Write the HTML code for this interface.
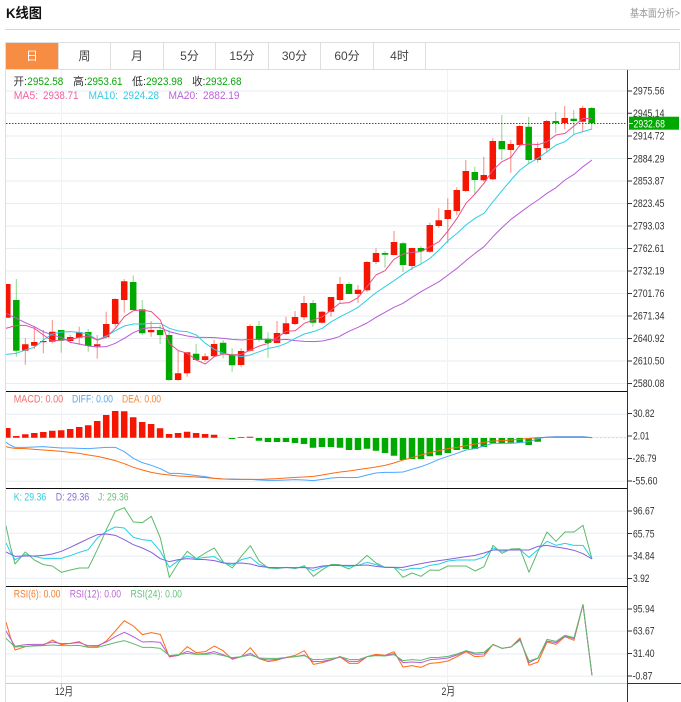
<!DOCTYPE html>
<html lang="zh">
<head>
<meta charset="utf-8">
<title>K线图</title>
<style>
html,body{margin:0;padding:0;background:#fff;width:681px;height:702px;overflow:hidden}
svg{display:block;font-family:"Liberation Sans","Noto Sans CJK SC",sans-serif}
.a{font-size:11px;fill:#333}
.l{font-size:11px}
.t{font-size:12px;fill:#444;text-anchor:middle}
polyline{fill:none;stroke-width:3;stroke-linejoin:round}
</style>
</head>
<body>
<svg width="681" height="702" viewBox="0 0 681 702" xmlns="http://www.w3.org/2000/svg">
<defs><clipPath id="c"><rect x="6" y="70" width="621" height="632"/></clipPath></defs>

<text x="6" y="18" textLength="36" lengthAdjust="spacingAndGlyphs" style="font-size:14px;font-weight:bold;fill:#111">K线图</text>
<text x="630" y="16.5" textLength="50" lengthAdjust="spacingAndGlyphs" style="font-size:10.5px;fill:#999">基本面分析&gt;</text>
<path d="M5 29.5H680" stroke="#d8d8d8" fill="none"/>

<!-- tabs -->
<rect x="6" y="43" width="52.5" height="26" fill="#f68d42"/>
<path d="M5.5 702V42.5H679.5V69.5H5.5M58.5 43V69M110.5 43V69M163.5 43V69M215.5 43V69M268.5 43V69M320.5 43V69M373.5 43V69M425.5 43V69" stroke="#dedede" fill="none"/>
<text class="t" x="32" y="60" style="fill:#fff">日</text>
<text class="t" x="84.5" y="60">周</text>
<text class="t" x="137" y="60">月</text>
<text class="t" x="189.5" y="60">5分</text>
<text class="t" x="242" y="60">15分</text>
<text class="t" x="294.5" y="60">30分</text>
<text class="t" x="347" y="60">60分</text>
<text class="t" x="399.5" y="60">4时</text>

<!-- grids -->
<path d="M6 91H627M6 113.3H627M6 136H627M6 158.5H627M6 181H627M6 203.5H627M6 226H627M6 248.5H627M6 271H627M6 293.5H627M6 316H627M6 338.5H627M6 361H627M6 383.5H627M6 414.3H627M6 437.3H627M6 459.3H627M6 481.3H627M6 511.3H627M6 533.3H627M6 556.3H627M6 578.3H627M6 609.3H627M6 631.3H627M6 654H627M6 676.3H627" stroke="#e6eef2" fill="none"/>
<path d="M61.5 70V683M447.5 70V683" stroke="#eff3f6" fill="none"/>

<g clip-path="url(#c)">
<!-- wicks red -->
<path stroke="#f51500" stroke-opacity=".5" fill="none" d="M25.3 338.3V364.7M34.3 326V349M43.3 330V353.3M52.3 320V343.3M70.2 335V343.3M79.2 326.7V345M97.2 335V358.7M106.2 311.7V338.3M115.2 298.3V326.7M124.2 279V312.7M151.1 321V336.7M178.1 350V380.7M187.1 352.3V376.7M205.1 353.3V361.7M214.1 340V357.3M241.1 348.3V366.7M250 324.3V351.7M277 321V343.3M286 316.7V335M295 311V325M304 296V320M322 311V323.3M331 297V316.7M340 277V301.7M358 285V302.7M367 261V292M376 248.3V264M394 231V255M412 248V270M429.8 222.7V252.7M438.8 208.3V227.7M447.8 198.3V243.3M456.8 187.3V215.3M465.8 160V191.7M483.8 156.7V181.7M492.8 138.3V180M510.8 140V172.7M519.7 125V146.7M537.7 142.3V162.7M546.7 120V152.7M564.7 106V129.3M582.7 105.7V131.7"/>
<!-- wicks green -->
<path stroke="#00a800" stroke-opacity=".45" fill="none" d="M16.3 279V356.7M61.2 330V352.7M88.2 329V351.7M133.2 275.3V310M142.2 300V335M160.1 325V344M169.1 330V380.7M196.1 344V360.7M223.1 340V358.3M232.1 348.3V371.7M259 321V341.7M268 332.3V357.7M313 300V326.7M349 282.3V294M385 251V267.7M403 241.7V272M421 246V263.3M474.8 166.7V194M501.8 115V160M528.7 117V163.3M555.7 112V133.3M573.7 110V135M591.7 107V129.3"/>
<!-- bodies red -->
<path stroke="#f51500" stroke-width="6.5" fill="none" d="M7.3 284V317.7M25.3 344.3V350.7M34.3 342V345.7M43.3 341V342.3M52.3 331.7V341.7M70.2 337V341M79.2 332.3V337.7M97.2 344.3V346.3M106.2 324V337.3M115.2 299V324M124.2 281.3V300M151.1 330V332.3M178.1 373.3V380M187.1 352.3V373.3M205.1 356.3V360M214.1 344V356.3M241.1 351V365M250 326V350.7M277 333V343M286 323.3V334M295 317V324M304 303V317.3M322 311.7V322.7M331 297V311.7M340 284V300M358 289.7V294M367 262V290.3M376 253V262M394 242V255M412 248V266M429.8 225V251.7M438.8 220.3V226M447.8 210V219M456.8 190V211M465.8 171V191M483.8 175V180.3M492.8 141V179.3M510.8 144V150M519.7 126V145M537.7 148V160M546.7 121V148.3M564.7 118V123M582.7 108V121.7"/>
<!-- bodies green -->
<path stroke="#00a900" stroke-width="6.5" fill="none" d="M16.3 300V350.7M61.2 330V340.7M88.2 332V346M133.2 282V310M142.2 309.3V333.3M160.1 330V335M169.1 335V380M196.1 353.7V360M223.1 342.7V353.7M232.1 354.3V365.3M259 326V340M268 338.7V343M313 303V322.7M349 284V294M385 253V254.7M403 243.3V265M421 248V251.3M474.8 172V180M501.8 141V149.3M528.7 126.7V160M555.7 121V123M573.7 118.7V121M591.7 108V123.3"/>

<!-- current price line -->
<path d="M6 123.5H627" stroke="#0a7a0a" stroke-dasharray="1.5 1.5" fill="none"/>

<!-- MA lines left half -->
<g transform="translate(0,260) scale(.33333)">
<polyline stroke="#b85cd6" points="18,160 49,175 76,188 103,200 130,215 157,225 184,232 211,247 238,252 265,258 292,261 319,260 346,250 373,235 400,218 427,206 454,203 481,203 508,215 535,222 562,228 589,232 616,232 643,233 670,235 697,238 724,240 751,238 778,238 805,238 832,240 859,238 886,242 913,244 940,245 967,243 994,237 1021,229"/>
<polyline stroke="#2fcde6" points="18,283 49,280 76,270 103,262 130,240 157,222 184,216 211,215 238,217 265,222 292,240 319,228 346,212 373,198 400,192 427,192 454,190 481,190 508,205 535,213 562,215 589,225 616,250 643,268 670,280 697,285 724,290 751,285 778,275 805,265 832,260 859,250 886,235 913,222 940,215 967,205 994,185 1021,170"/>
<polyline stroke="#ec4f8b" points="18,205 49,196 76,196 103,205 130,225 157,243 184,240 211,238 238,232 265,228 292,240 319,232 346,205 373,170 400,152 427,150 454,155 481,180 508,250 535,272 562,280 589,300 616,312 643,290 670,282 697,285 724,283 751,270 778,258 805,250 832,232 859,214 886,212 913,190 940,180 967,170 994,150 1021,128"/>
</g>
<!-- MA lines right half -->
<g transform="translate(340,0) scale(.33333)">
<polyline stroke="#b85cd6" points="0,1008 27,994 54,982 81,969 108,952 135,937 162,922 189,910 216,892 243,875 270,860 297,845 324,825 351,805 378,782 405,760 432,740 459,710 486,683 513,658 540,638 567,618 594,600 621,580 648,563 675,540 702,523 729,500 756,480"/>
<polyline stroke="#2fcde6" points="0,950 27,937 54,922 81,900 108,878 135,860 162,842 189,823 216,805 243,792 270,775 297,750 324,722 351,700 378,675 405,655 432,640 459,605 486,572 513,540 540,510 567,490 594,475 621,455 648,435 675,425 702,403 729,395 756,387"/>
<polyline stroke="#ec4f8b" points="0,910 27,908 54,893 81,860 108,825 135,812 162,778 189,762 216,757 243,755 270,740 297,725 324,693 351,655 378,610 405,582 432,550 459,510 486,485 513,472 540,435 567,432 594,434 621,425 648,405 675,400 702,378 729,355 756,356"/>
</g>

<!-- MACD bars -->
<path stroke="#f51500" stroke-width="6.5" fill="none" d="M7.3 428V437.7M16.3 436V437.7M25.3 434.3V437.7M34.3 433V437.7M43.3 432V437.7M52.3 430.7V437.7M61.2 430.3V437.7M70.2 429V437.7M79.2 427V437.7M88.2 425.3V437.7M97.2 421V437.7M106.2 415V437.7M115.2 411V437.7M124.2 411.3V437.7M133.2 417.3V437.7M142.2 422V437.7M151.1 424V437.7M160.1 428.3V437.7M169.1 434V437.7M178.1 433V437.7M187.1 431.7V437.7M196.1 433V437.7M205.1 434V437.7M214.1 434.7V437.7M241.1 437V437.8M250 436.8V437.7"/>
<path stroke="#00a900" stroke-width="6.5" fill="none" d="M232.1 438V439M259 438V440.7M268 438V442M277 438V442M286 438V442M295 438V443M304 438V444M313 438V447.7M322 438V447M331 438V447M340 438V447.7M349 438V450M358 438V450M367 438V448.7M376 438V450.7M385 438V453M394 438V455.7M403 438V460M412 438V459M421 438V459M429.8 438V456.3M438.8 438V455.3M447.8 438V453M456.8 438V450M465.8 438V449M474.8 438V449M483.8 438V447M492.8 438V443.3M501.8 438V443.3M510.8 438V442.7M519.7 438V442.7M528.7 438V445M537.7 438V441.7"/>
<g transform="translate(0,390) scale(.33333)">
<polyline stroke="#4ea7ff" points="18,157 30,165 45,172 76,172 103,171 130,170 157,172 184,174 211,174 238,175 265,176 292,174 319,172 346,172 373,185 400,205 427,218 454,226 481,236 508,250 535,250 562,253 589,257 616,260 643,265 670,267 697,267 724,268 751,268 778,270 805,271 832,271 859,270 886,269 913,270 940,272 967,268 994,264 1021,262"/>
<polyline stroke="#ff6a10" points="18,170 30,173 45,175 76,176 103,178 130,180 157,182 184,184 211,187 238,190 265,195 292,199 319,205 346,212 373,221 400,232 427,240 454,247 481,252 508,255 535,258 562,259 589,261 616,263 643,265 670,267 697,268 724,268 751,268 778,268 805,267 832,266 859,264 886,262 913,261 940,259 967,255 994,250 1021,246"/>
</g>
<g transform="translate(340,390) scale(.33333)">
<polyline stroke="#4ea7ff" points="0,262 27,263 54,262 81,255 108,249 135,247 162,247 189,246 216,238 243,230 270,220 297,208 324,199 351,190 378,180 405,176 432,168 459,160 486,160 513,160 540,158 567,155 594,146 621,141 648,140 675,140 702,140 729,140 756,143"/>
<polyline stroke="#ff6a10" points="0,246 27,243 54,239 81,235 108,231 135,226 162,219 189,210 216,203 243,195 270,188 297,182 324,176 351,172 378,167 405,162 432,157 459,153 486,152 513,150 540,148 567,145 594,143 621,142 648,142 675,142 702,142 729,142 756,143"/>
</g>
<path d="M592 437.7H627" stroke="#bfe0f5" stroke-dasharray="2 2" fill="none"/>

<!-- KDJ -->
<g transform="translate(0,488) scale(.33333)">
<polyline stroke="#5cbb6a" points="18,113 30,170 45,228 76,192 103,216 130,230 157,234 184,253 211,246 238,240 265,240 292,185 319,125 346,70 373,59 400,102 427,104 454,85 481,150 508,268 535,225 562,190 589,212 616,195 643,180 670,222 697,240 724,205 751,173 778,220 805,240 832,242 859,238 886,242 913,233 940,265 967,245 994,229 1021,230"/>
<polyline stroke="#27cfe6" points="18,165 30,190 45,215 76,200 103,205 130,211 157,211 184,211 211,203 238,193 265,185 292,150 319,130 346,117 373,120 400,148 427,155 454,158 481,190 508,238 535,218 562,204 589,212 616,208 643,206 670,224 697,232 724,215 751,208 778,230 805,238 832,240 859,238 886,240 913,237 940,248 967,237 994,232 1021,233"/>
<polyline stroke="#8a5fd8" points="18,192 45,205 76,204 103,204 130,202 157,198 184,190 211,178 238,165 265,152 292,140 319,138 346,142 373,155 400,170 427,180 454,193 481,212 508,221 535,215 562,212 589,214 616,215 643,218 670,225 697,226 724,225 751,228 778,235 805,238 832,239 859,239 886,239 913,239 940,240 967,234 994,232 1021,232"/>
</g>
<g transform="translate(340,488) scale(.33333)">
<polyline stroke="#5cbb6a" points="0,232 27,243 54,227 81,202 108,225 135,238 162,238 189,268 216,255 243,265 270,246 297,247 324,234 351,234 378,234 405,249 432,236 459,172 486,196 513,183 540,182 567,253 594,190 621,132 648,160 675,132 702,132 729,112 756,213"/>
<polyline stroke="#27cfe6" points="0,232 27,235 54,232 81,223 108,230 135,238 162,238 189,247 216,241 243,241 270,232 297,228 324,219 351,216 378,216 405,216 432,207 459,180 486,190 513,185 540,185 567,208 594,185 621,160 648,172 675,166 702,172 729,172 756,213"/>
<polyline stroke="#8a5fd8" points="0,232 27,232 54,232 81,231 108,235 135,238 162,238 189,238 216,232 243,227 270,222 297,218 324,214 351,210 378,206 405,202 432,195 459,186 486,186 513,186 540,186 567,186 594,175 621,172 648,177 675,181 702,187 729,197 756,213"/>
</g>

<!-- RSI -->
<g transform="translate(0,586) scale(.33333)">
<polyline stroke="#ff6a10" points="18,108 30,150 45,192 76,182 103,178 130,178 157,162 184,176 211,172 238,167 265,183 292,182 319,165 346,135 373,104 400,120 427,146 454,140 481,145 508,213 535,208 562,182 589,200 616,197 643,180 670,195 697,220 724,212 751,185 778,218 805,227 832,222 859,214 886,208 913,194 940,235 967,230 994,222 1021,211"/>
<polyline stroke="#b85cd6" points="18,135 45,181 76,176 103,175 130,175 157,168 184,173 211,172 238,170 265,179 292,179 319,168 346,152 373,139 400,152 427,168 454,167 481,169 508,211 535,208 562,196 589,204 616,203 643,197 670,206 697,218 724,212 751,202 778,218 805,222 832,220 859,215 886,212 913,207 940,227 967,226 994,221 1021,213"/>
<polyline stroke="#5cbb6a" points="18,157 45,183 76,181 103,180 130,179 157,177 184,179 211,179 238,178 265,184 292,184 319,177 346,170 373,164 400,173 427,184 454,184 481,187 508,209 535,206 562,202 589,205 616,205 643,203 670,209 697,215 724,212 751,207 778,216 805,217 832,217 859,214 886,212 913,209 940,221 967,220 994,217 1021,214"/>
</g>
<g transform="translate(340,586) scale(.33333)">
<polyline stroke="#ff6a10" points="0,212 27,232 54,232 81,212 108,205 135,208 162,197 189,243 216,239 243,244 270,232 297,230 324,225 351,212 378,197 405,212 432,210 459,175 486,187 513,183 540,156 567,238 594,228 621,168 648,175 675,152 702,163 729,56 756,268"/>
<polyline stroke="#b85cd6" points="0,212 27,226 54,226 81,212 108,208 135,209 162,203 189,230 216,228 243,230 270,221 297,219 324,216 351,207 378,195 405,205 432,204 459,176 486,187 513,183 540,160 567,230 594,216 621,165 648,170 675,150 702,158 729,56 756,268"/>
<polyline stroke="#5cbb6a" points="0,212 27,220 54,221 81,212 108,209 135,210 162,206 189,224 216,221 243,223 270,215 297,214 324,211 351,204 378,194 405,201 432,199 459,176 486,187 513,183 540,163 567,225 594,216 621,160 648,166 675,148 702,155 729,56 756,268"/>
</g>
</g>

<!-- panel separators and axes -->
<path d="M6 391.5H627M6 488.5H627M6 586.5H627" stroke="#111" fill="none"/>
<path d="M6 683.5H627" stroke="#ccc" fill="none"/>
<path d="M627.5 70V702M627 683.5H681" stroke="#333" fill="none"/>
<path d="M61.5 683V687M447.5 683V687" stroke="#bbb" fill="none"/>
<path d="M628 91H632M628 113.3H632M628 136H632M628 158.5H632M628 181H632M628 203.5H632M628 226H632M628 248.5H632M628 271H632M628 293.5H632M628 316H632M628 338.5H632M628 361H632M628 383.5H632M628 413.5H632M628 436H632M628 458.5H632M628 481H632M628 511H632M628 533.5H632M628 556H632M628 578.5H632M628 609H632M628 631H632M628 653.5H632M628 676H632" stroke="#333" fill="none"/>

<!-- axis labels -->
<text class="a" x="633" y="94.6" textLength="31.5" lengthAdjust="spacingAndGlyphs">2975.56</text>
<text class="a" x="633" y="117" textLength="31.5" lengthAdjust="spacingAndGlyphs">2945.14</text>
<text class="a" x="633" y="139.7" textLength="31.5" lengthAdjust="spacingAndGlyphs">2914.72</text>
<text class="a" x="633" y="162.3" textLength="31.5" lengthAdjust="spacingAndGlyphs">2884.29</text>
<text class="a" x="633" y="184.7" textLength="31.5" lengthAdjust="spacingAndGlyphs">2853.87</text>
<text class="a" x="633" y="207.2" textLength="31.5" lengthAdjust="spacingAndGlyphs">2823.45</text>
<text class="a" x="633" y="229.7" textLength="31.5" lengthAdjust="spacingAndGlyphs">2793.03</text>
<text class="a" x="633" y="252.2" textLength="31.5" lengthAdjust="spacingAndGlyphs">2762.61</text>
<text class="a" x="633" y="274.7" textLength="31.5" lengthAdjust="spacingAndGlyphs">2732.19</text>
<text class="a" x="633" y="297.2" textLength="31.5" lengthAdjust="spacingAndGlyphs">2701.76</text>
<text class="a" x="633" y="319.7" textLength="31.5" lengthAdjust="spacingAndGlyphs">2671.34</text>
<text class="a" x="633" y="342.2" textLength="31.5" lengthAdjust="spacingAndGlyphs">2640.92</text>
<text class="a" x="633" y="364.7" textLength="31.5" lengthAdjust="spacingAndGlyphs">2610.50</text>
<text class="a" x="633" y="387.2" textLength="31.5" lengthAdjust="spacingAndGlyphs">2580.08</text>

<rect x="629" y="116.7" width="50" height="13" fill="#00a900"/>
<path d="M629 123.5H633" stroke="#fff" fill="none"/>
<text class="a" x="633.5" y="127.3" textLength="31.5" lengthAdjust="spacingAndGlyphs" style="fill:#fff">2932.68</text>

<text class="a" x="633" y="417.2" textLength="21.5" lengthAdjust="spacingAndGlyphs">30.82</text>
<text class="a" x="633" y="439.7" textLength="16.5" lengthAdjust="spacingAndGlyphs">2.01</text>
<text class="a" x="632.5" y="462.2" textLength="24" lengthAdjust="spacingAndGlyphs">-26.79</text>
<text class="a" x="632.5" y="484.7" textLength="25" lengthAdjust="spacingAndGlyphs">-55.60</text>

<text class="a" x="633" y="514.4" textLength="21.5" lengthAdjust="spacingAndGlyphs">96.67</text>
<text class="a" x="633" y="537.4" textLength="21.5" lengthAdjust="spacingAndGlyphs">65.75</text>
<text class="a" x="633" y="559.7" textLength="21.5" lengthAdjust="spacingAndGlyphs">34.84</text>
<text class="a" x="633" y="582" textLength="16.5" lengthAdjust="spacingAndGlyphs">3.92</text>

<text class="a" x="633" y="612.4" textLength="21.5" lengthAdjust="spacingAndGlyphs">95.94</text>
<text class="a" x="633" y="634.7" textLength="21.5" lengthAdjust="spacingAndGlyphs">63.67</text>
<text class="a" x="633" y="657.2" textLength="21.5" lengthAdjust="spacingAndGlyphs">31.40</text>
<text class="a" x="632.5" y="679.4" textLength="20" lengthAdjust="spacingAndGlyphs">-0.87</text>

<!-- legend -->
<g class="l">
<text class="l" x="13.5" y="85" textLength="13.5" lengthAdjust="spacingAndGlyphs" fill="#333">开:</text>
<text class="l" x="27.3" y="85" textLength="36" lengthAdjust="spacingAndGlyphs" fill="#0aa50a">2952.58</text>
<text class="l" x="73" y="85" textLength="14" lengthAdjust="spacingAndGlyphs" fill="#333">高:</text>
<text class="l" x="87" y="85" textLength="35.5" lengthAdjust="spacingAndGlyphs" fill="#0aa50a">2953.61</text>
<text class="l" x="132" y="85" textLength="14" lengthAdjust="spacingAndGlyphs" fill="#333">低:</text>
<text class="l" x="146" y="85" textLength="36.5" lengthAdjust="spacingAndGlyphs" fill="#0aa50a">2923.98</text>
<text class="l" x="192" y="85" textLength="13.5" lengthAdjust="spacingAndGlyphs" fill="#333">收:</text>
<text class="l" x="205.5" y="85" textLength="36" lengthAdjust="spacingAndGlyphs" fill="#0aa50a">2932.68</text>

<text class="l" x="13.7" y="99" textLength="24.5" lengthAdjust="spacingAndGlyphs" fill="#f45f9c">MA5:</text>
<text class="l" x="43" y="99" textLength="35.5" lengthAdjust="spacingAndGlyphs" fill="#f45f9c">2938.71</text>
<text class="l" x="88.5" y="99" textLength="29.5" lengthAdjust="spacingAndGlyphs" fill="#35cbe6">MA10:</text>
<text class="l" x="123" y="99" textLength="36" lengthAdjust="spacingAndGlyphs" fill="#35cbe6">2924.28</text>
<text class="l" x="168.5" y="99" textLength="29.5" lengthAdjust="spacingAndGlyphs" fill="#bc62d6">MA20:</text>
<text class="l" x="203" y="99" textLength="36.5" lengthAdjust="spacingAndGlyphs" fill="#bc62d6">2882.19</text>

<text class="l" x="13.7" y="402.7" textLength="49.5" lengthAdjust="spacingAndGlyphs" fill="#f66d6d">MACD: 0.00</text>
<text class="l" x="72" y="402.7" textLength="41" lengthAdjust="spacingAndGlyphs" fill="#58a9f0">DIFF: 0.00</text>
<text class="l" x="122" y="402.7" textLength="39" lengthAdjust="spacingAndGlyphs" fill="#f8873a">DEA: 0.00</text>

<text class="l" x="13.7" y="500.7" textLength="32.5" lengthAdjust="spacingAndGlyphs" fill="#2fcfe2">K: 29.36</text>
<text class="l" x="55.7" y="500.7" textLength="33.5" lengthAdjust="spacingAndGlyphs" fill="#8c6bd8">D: 29.36</text>
<text class="l" x="98" y="500.7" textLength="30.5" lengthAdjust="spacingAndGlyphs" fill="#6fc07a">J: 29.36</text>

<text class="l" x="13.7" y="597.7" textLength="46.8" lengthAdjust="spacingAndGlyphs" fill="#f57f2d">RSI(6): 0.00</text>
<text class="l" x="69.7" y="597.7" textLength="51.3" lengthAdjust="spacingAndGlyphs" fill="#c066d8">RSI(12): 0.00</text>
<text class="l" x="130.5" y="597.7" textLength="51.5" lengthAdjust="spacingAndGlyphs" fill="#66c47a">RSI(24): 0.00</text>
</g>

<text x="55" y="695" textLength="18" lengthAdjust="spacingAndGlyphs" style="font-size:11px;fill:#333">12月</text>
<text x="441.5" y="695" textLength="13.5" lengthAdjust="spacingAndGlyphs" style="font-size:11px;fill:#333">2月</text>
</svg>
</body>
</html>
